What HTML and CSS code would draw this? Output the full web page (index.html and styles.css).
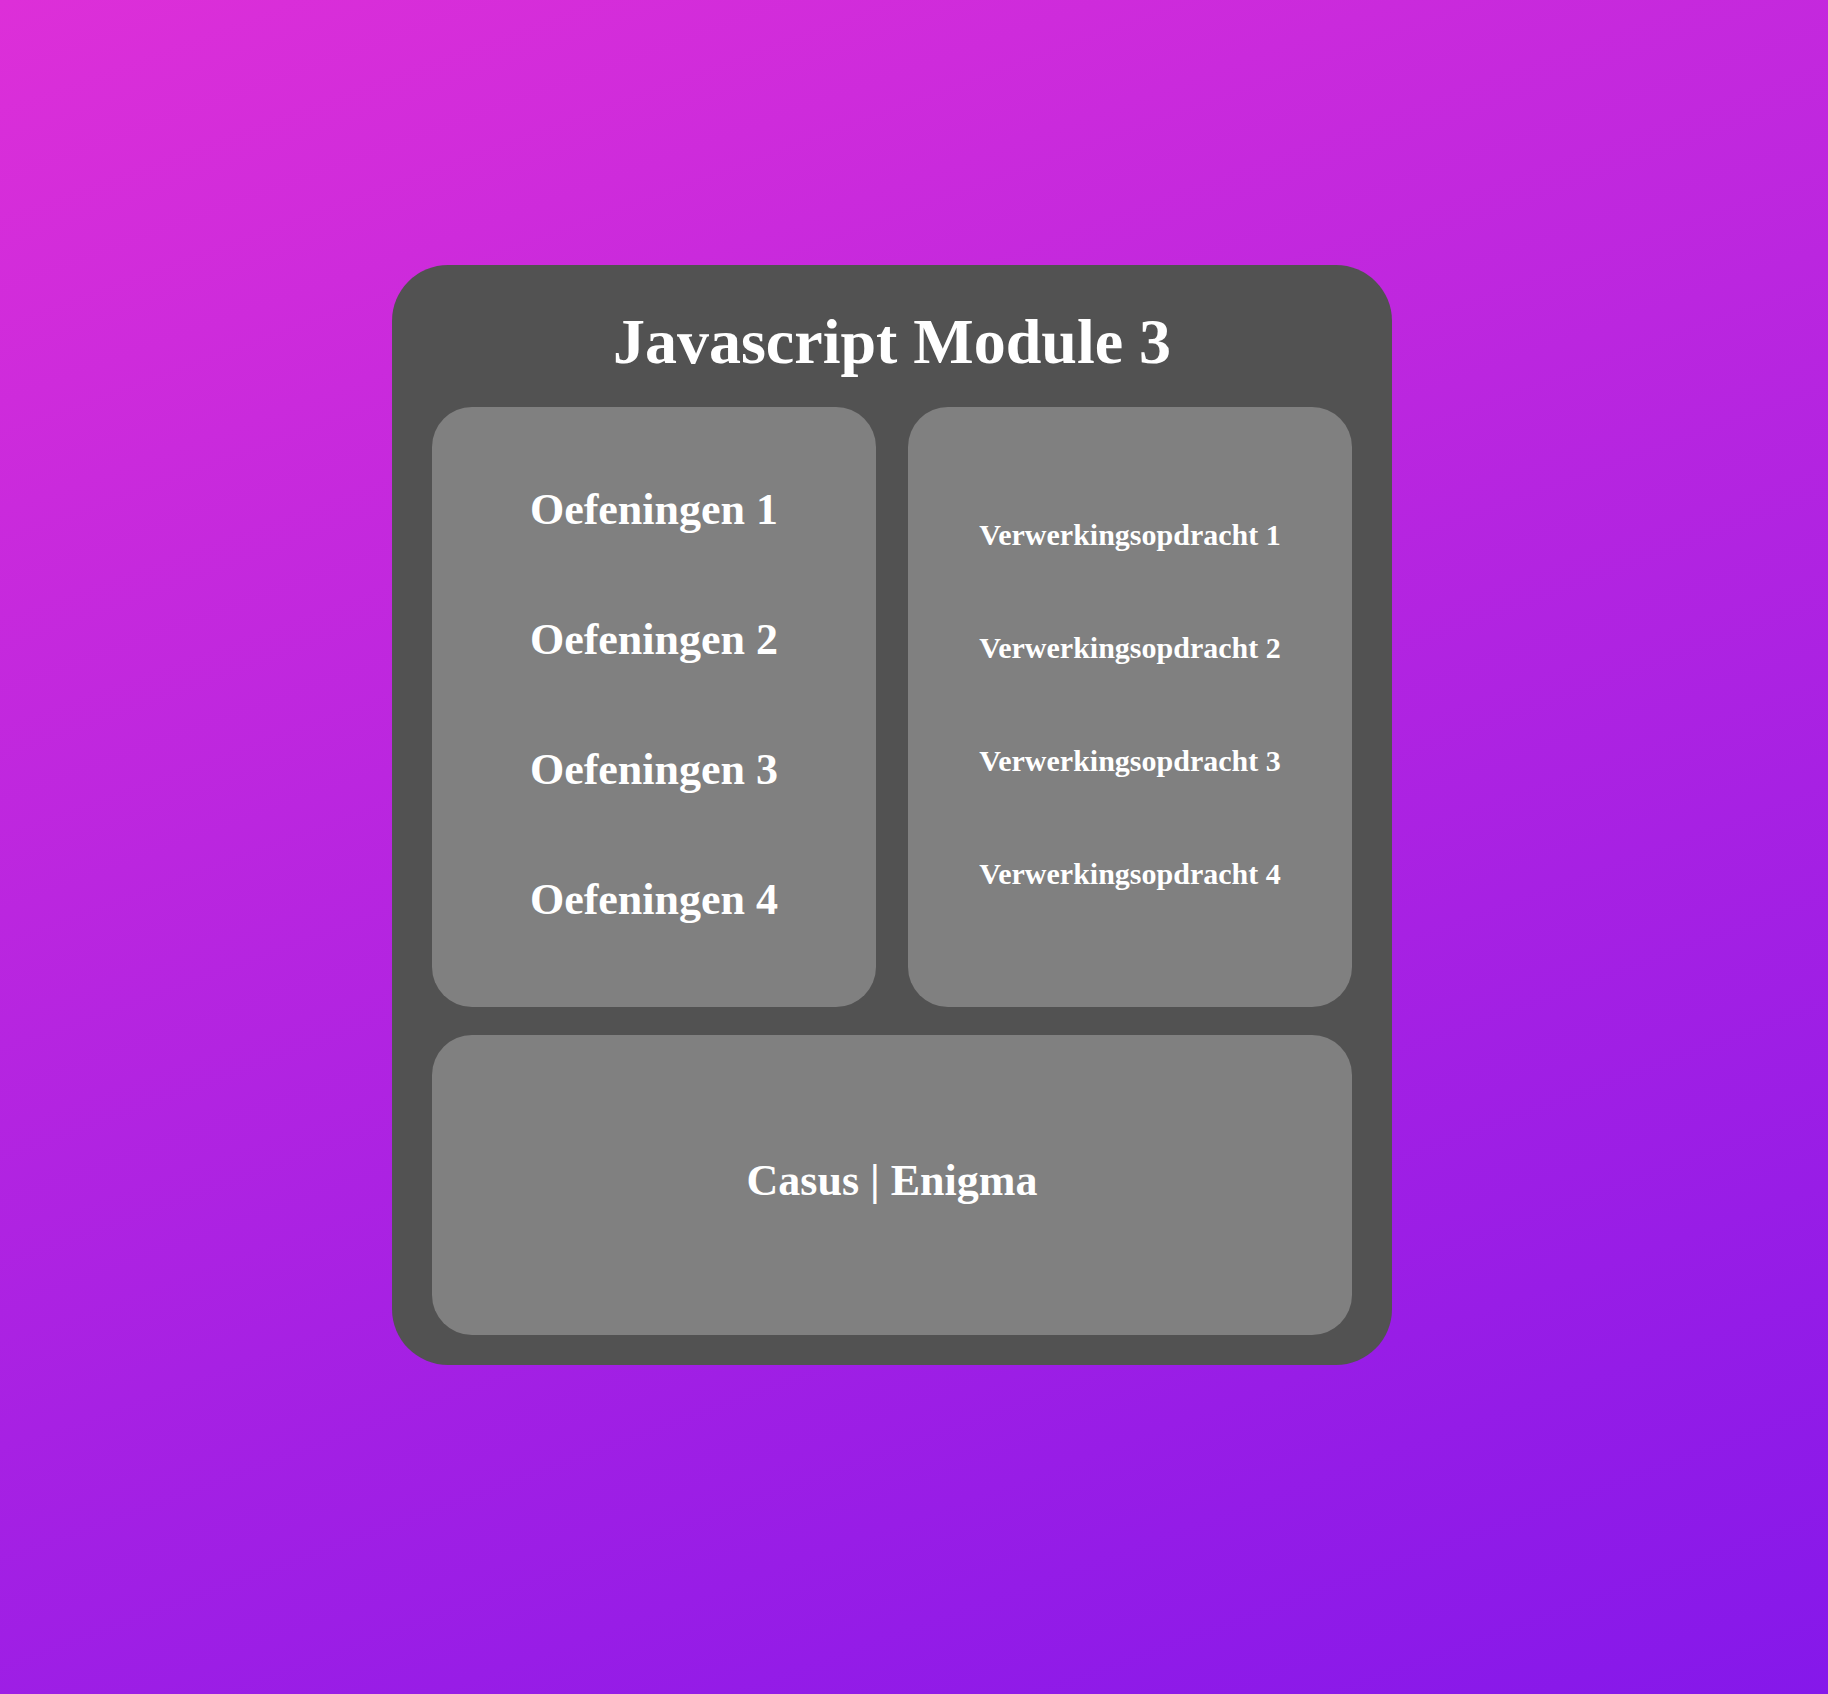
FILE: index.html
```html
<!DOCTYPE html>
<html lang="nl">
    <head>
        <meta charset="UTF-8">
        <meta name="viewport" content="width=device-width, initial-scale=1.0">
        <title>Javascript Module 3</title>
        <link rel="stylesheet" href="styles.css">
    </head>

    <body>

        <!-- Hoofdblok -->

        <main class="module">
            <h1 class="title">Javascript Module 3</h1>

            <div class="grid">

                <!-- Oefeningen -->

                <div class="block block-list">
                    <a href="#" class="link big">Oefeningen 1</a>
                    <a href="#" class="link big">Oefeningen 2</a>
                    <a href="#" class="link big">Oefeningen 3</a>
                    <a href="#" class="link big">Oefeningen 4</a>
                </div>

                <!-- Verwerkingsopdrachten -->

                <div class="block block-list">
                    <a href="#" class="link small">Verwerkingsopdracht 1</a>
                    <a href="#" class="link small">Verwerkingsopdracht 2</a>
                    <a href="#" class="link small">Verwerkingsopdracht 3</a>
                    <a href="#" class="link small">Verwerkingsopdracht 4</a>
                </div>

                <!-- Casus -->

                <div class="block block-wide">
                    <a href="#" class="link big">Casus | Enigma</a>
                </div>

            </div>
        </main>

    </body>

</html>
```

FILE: styles.css
```css
html {
    min-height: 100%;
    background: linear-gradient(160deg, #dd2fd8 0%, #8518ea 100%);
}

body {
    margin: 0;
    padding: 265px 0 0 392px;
    min-height: 1694px;
    box-sizing: border-box;
    font-family: "Liberation Serif", "Times New Roman", serif;
    color: white;
}

/* Hoofdblok */

.module {
    width: 1000px;
    height: 1100px;
    box-sizing: border-box;
    padding: 40px 40px 31px;
    background-color: #525252;
    border-radius: 56px;
}

.title {
    margin: 0 0 28px;
    font-size: 64px;
    font-weight: bold;
    text-align: center;
}

.grid {
    display: grid;
    grid-template-columns: 1fr 1fr;
    grid-template-rows: 600px 300px;
    column-gap: 32px;
    row-gap: 28px;
}

/* Blokken */

.block {
    display: flex;
    flex-direction: column;
    justify-content: center;
    align-items: center;
    padding-bottom: 9px;
    background-color: #808080;
    border-radius: 40px;
}

.block-list {
    gap: 79px;
    padding-bottom: 5px;
}

.block-wide {
    grid-column: 1 / 3;
}

.link {
    color: white;
    font-weight: bold;
    text-decoration: none;
}

.big {
    font-size: 44px;
}

.small {
    font-size: 30px;
}
```
